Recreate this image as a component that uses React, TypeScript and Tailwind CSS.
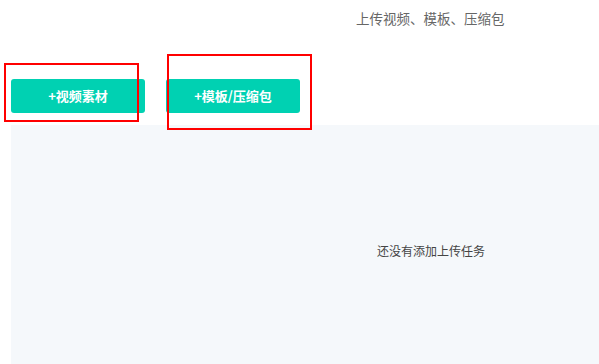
const font = { fontFamily: '"Microsoft YaHei", "Noto Sans CJK SC", sans-serif' };

export default function App() {
  return (
    <div
      className="relative w-[599px] h-[364px] overflow-hidden bg-white"
      style={font}
    >
      {/* top hint */}
      <div className="flex h-[37px] items-center pl-[356px] text-[13.5px] text-[#666666]">
        上传视频、模板、压缩包
      </div>

      {/* upload buttons */}
      <div className="mt-[42px] flex gap-[21px] pl-[11px]">
        <button className="flex h-[34px] w-[134px] items-center justify-center rounded-[3px] bg-[#00d1b2] text-[13px] font-bold text-white">
          +视频素材
        </button>
        <button className="flex h-[34px] w-[134px] items-center justify-center rounded-[3px] bg-[#00d1b2] text-[13px] font-bold text-white">
          +模板/压缩包
        </button>
      </div>

      {/* task list */}
      <div className="ml-[11px] mt-[12px] flex h-[239px] items-center bg-[#f5f8fb] pl-[366px] pt-[12px] text-[12px] text-[#444444]">
        还没有添加上传任务
      </div>

      {/* annotation boxes */}
      <div className="absolute left-[4px] top-[63px] h-[59px] w-[135px] border-2 border-[#ff0000]" />
      <div className="absolute left-[167px] top-[54px] h-[76px] w-[145px] border-2 border-[#ff0000]" />
    </div>
  );
}
